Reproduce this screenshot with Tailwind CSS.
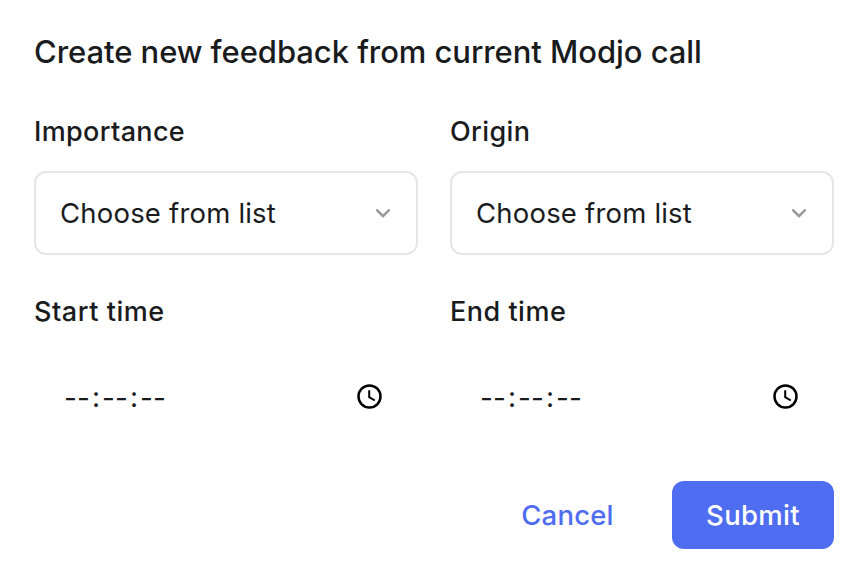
<!DOCTYPE html>
<html lang="en">
<head>
  <meta charset="UTF-8" />
  <meta name="viewport" content="width=device-width, initial-scale=1.0"/>
  <title>Create feedback</title>
  <script src="https://cdn.jsdelivr.net/npm/@tailwindcss/browser@4"></script>
</head>
<body class="bg-white font-['Inter',sans-serif] [font-optical-sizing:none] text-[#1a1b1d] antialiased overflow-hidden">
  <form class="px-[34px] pt-8 whitespace-nowrap">
    <h2 class="text-[31px] leading-10 font-medium tracking-[-0.06px]">Create new feedback from current Modjo call</h2>

    <div class="mt-10 grid grid-cols-2 gap-x-8 gap-y-[37px]">
      <div>
        <label class="block text-[27px] leading-10 font-medium tracking-[0.35px]">Importance</label>
        <button type="button" class="mt-[19px] flex h-[84px] w-full items-center justify-between rounded-xl border-2 border-[#e6e6e6] pl-6 pr-[25px] text-[27.5px] tracking-[0.2px]">
          <span class="pt-0.5">Choose from list</span>
          <svg class="h-4 w-4" viewBox="0 0 16 16" fill="none" stroke="#999" stroke-width="2.6" stroke-linecap="round" stroke-linejoin="round"><path d="M2.2 5.3 8 11.2l5.8-5.9"/></svg>
        </button>
      </div>
      <div>
        <label class="block text-[27px] leading-10 font-medium tracking-[0.4px]">Origin</label>
        <button type="button" class="mt-[19px] flex h-[84px] w-full items-center justify-between rounded-xl border-2 border-[#e6e6e6] pl-6 pr-[25px] text-[27.5px] tracking-[0.2px]">
          <span class="pt-0.5">Choose from list</span>
          <svg class="h-4 w-4" viewBox="0 0 16 16" fill="none" stroke="#999" stroke-width="2.6" stroke-linecap="round" stroke-linejoin="round"><path d="M2.2 5.3 8 11.2l5.8-5.9"/></svg>
        </button>
      </div>
      <div>
        <label class="block text-[27px] leading-10 font-medium tracking-[0.55px]">Start time</label>
        <div class="mt-[19px] flex h-[90px] items-center justify-between pt-px pl-[30px] pr-9 text-[28px]">
          <div class="flex pt-[3px]"><span class="w-[26px]">--</span><span class="-mt-px w-3 text-center">:</span><span class="w-[26px]">--</span><span class="-mt-px w-3 text-center">:</span><span>--</span></div>
          <svg class="h-[25px] w-[25px]" viewBox="0 0 25 25" fill="none" stroke="#000" stroke-width="2.5"><circle cx="12.5" cy="12.5" r="11"/><path d="M12.2 6.2v7l5.6 3.3" stroke-width="2"/></svg>
        </div>
      </div>
      <div>
        <label class="block text-[27px] leading-10 font-medium tracking-[0.5px]">End time</label>
        <div class="mt-[19px] flex h-[90px] items-center justify-between pt-px pl-[30px] pr-9 text-[28px]">
          <div class="flex pt-[3px]"><span class="w-[26px]">--</span><span class="-mt-px w-3 text-center">:</span><span class="w-[26px]">--</span><span class="-mt-px w-3 text-center">:</span><span>--</span></div>
          <svg class="h-[25px] w-[25px]" viewBox="0 0 25 25" fill="none" stroke="#000" stroke-width="2.5"><circle cx="12.5" cy="12.5" r="11"/><path d="M12.2 6.2v7l5.6 3.3" stroke-width="2"/></svg>
        </div>
      </div>
    </div>

    <div class="mt-10 flex justify-end gap-6 text-[27.5px] font-medium">
      <button type="button" class="h-[68px] w-[162px] pt-0.5 pl-px tracking-[0.2px] text-[#4f6df0]">Cancel</button>
      <button type="submit" class="h-[68px] w-[162px] rounded-xl bg-[#4f6df0] pt-0.5 tracking-[0.3px] text-white shadow-[0_2px_2px_rgba(0,0,0,0.02)]">Submit</button>
    </div>
  </form>
</body>
</html>
